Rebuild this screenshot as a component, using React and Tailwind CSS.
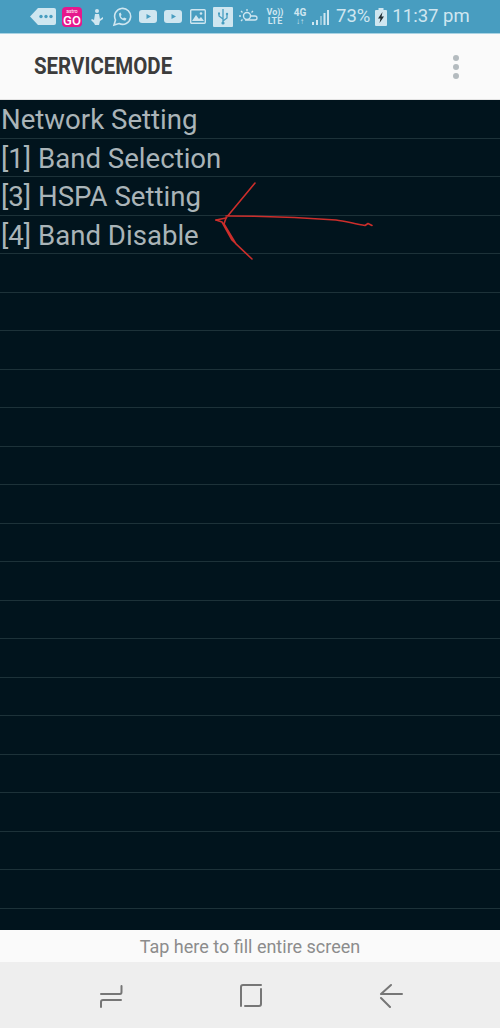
function Icon({ children, w = 20, h = 20, vb, className = "" }) {
  return (
    <svg width={w} height={h} viewBox={vb || `0 0 ${w} ${h}`} className={"shrink-0 " + className}>
      {children}
    </svg>
  );
}

const C = "#cfe6f0";

function StatusBar() {
  return (
    <div className="relative h-[34px] bg-[#489dc0] border-b border-[#a9d3e3] font-['Roboto',sans-serif] flex items-center">
      <div className="flex items-center pl-[30px] w-[260px]">
        <Icon w={26} h={19}>
          <path d="M0 9.5 L8 1 H24 a2 2 0 0 1 2 2 V16 a2 2 0 0 1-2 2 H8 Z" fill={C} />
          <circle cx="11" cy="9.5" r="1.7" fill="#489dc0" />
          <circle cx="16" cy="9.5" r="1.7" fill="#489dc0" />
          <circle cx="21" cy="9.5" r="1.7" fill="#489dc0" />
        </Icon>
        <div className="ml-[6px] w-5 h-5 rounded-[4px] bg-[#e6178c] flex flex-col items-center justify-end shrink-0 overflow-hidden">
          <span className="text-[5px] leading-[5px] text-white">astro</span>
          <span className="text-[13px] leading-[13px] font-medium text-white">GO</span>
        </div>
        <Icon w={14} h={18} className="ml-[8px]">
          <circle cx="7" cy="3" r="2" fill={C} />
          <path d="M5 6 h4 l1 5 l3 -2 v2 l-3 2 l-1 4 h-4 l-1 -2 l-3 -3 l1 -1 l2 1 z" fill={C} />
        </Icon>
        <Icon w={20} h={20} className="ml-[8px]">
          <path d="M2 18 L3.5 13 A8 8 0 1 1 7 16.5 Z" fill="none" stroke={C} strokeWidth="1.6" />
          <path d="M7 6.5 C7 11 10 13.5 13.5 13.5 L14.5 11.5 L12 10.5 L11 11.5 C10 11 9 10 8.7 9 L9.6 8 L8.6 5.5 Z" fill={C} />
        </Icon>
        {[0, 1].map((i) => (
          <Icon key={i} w={18} h={13} className="ml-[7px]">
            <rect x="0" y="0" width="18" height="13" rx="3" fill={C} />
            <path d="M7.5 4 L12 6.5 L7.5 9 Z" fill="#489dc0" />
          </Icon>
        ))}
        <Icon w={16} h={15} className="ml-[8px]">
          <rect x="0.7" y="0.7" width="14.6" height="13.6" rx="1" fill="none" stroke={C} strokeWidth="1.4" />
          <path d="M2 12 L6 6 L9 10 L11 8 L14 12 Z" fill={C} />
          <circle cx="11" cy="4.5" r="1.3" fill={C} />
        </Icon>
        <div className="ml-[7px] w-5 h-5 bg-[#cfe6f0] rounded-[1px] flex items-center justify-center shrink-0">
          <Icon w={12} h={17}>
            <path d="M6 1 V16 M6 11 L2 8 V6 M6 13 L10 10 V7" fill="none" stroke="#489dc0" strokeWidth="1.3" />
            <circle cx="6" cy="15" r="1.6" fill="#489dc0" />
            <rect x="1" y="4.5" width="2" height="2" fill="#489dc0" />
            <circle cx="10" cy="6" r="1.2" fill="#489dc0" />
          </Icon>
        </div>
        <Icon w={20} h={17} className="ml-[5px]">
          <circle cx="9" cy="8" r="3.5" fill="none" stroke={C} strokeWidth="1.4" />
          <path d="M9 1 V3 M3 3 L4.5 4.5 M1 8 H3 M3 13 L4.5 11.5 M15 3 L13.5 4.5" stroke={C} strokeWidth="1.3" />
          <path d="M7 12 H17 a2 2 0 0 0 0 -4 H12" fill="none" stroke={C} strokeWidth="1.3" />
        </Icon>
      </div>
      <div className="flex items-center absolute left-[266px] top-0 h-[33px]">
        <div className="flex flex-col items-center text-[#cfe6f0] font-bold text-[9px] leading-[9px] w-[18px] shrink-0">
          <span>Vo))</span>
          <span>LTE</span>
        </div>
        <div className="ml-[9px] flex flex-col items-center text-[#cfe6f0] font-bold text-[10px] leading-[9px] w-[14px] shrink-0">
          <span>4G</span>
          <span className="text-[8px]">↓↑</span>
        </div>
        <Icon w={17} h={16} className="ml-[5px]">
          <rect x="0" y="13" width="2" height="3" fill={C} />
          <rect x="4" y="11" width="2" height="5" fill={C} />
          <rect x="8" y="7" width="2" height="9" fill="#8fc3d8" />
          <rect x="11.5" y="4" width="2" height="12" fill={C} />
          <rect x="15" y="1" width="2" height="15" fill={C} />
        </Icon>
        <span className="ml-[7px] text-[#cfe6f0] text-[18.5px] leading-none whitespace-nowrap">73%</span>
        <Icon w={12} h={18} className="ml-[5px]">
          <rect x="3.5" y="0" width="5" height="2" fill={C} />
          <rect x="0" y="2" width="12" height="16" rx="1" fill={C} />
          <path d="M7.5 4 L3 10.5 H5.5 L4.5 15 L9 8.5 H6.5 Z" fill="#1f2d33" />
        </Icon>
        <span className="ml-[5px] text-[#cfe6f0] text-[18.5px] leading-none whitespace-nowrap">11:37 pm</span>
      </div>
    </div>
  );
}

function AppBar() {
  return (
    <div className="h-[66px] bg-[#fafafa] flex items-center justify-between pl-[34px] pr-[41px] border-b border-[#e3e3e3]">
      <span className="font-['Roboto',sans-serif] font-bold text-[23px] leading-none text-[#3c3c3c] scale-x-[0.89] origin-left">
        SERVICEMODE
      </span>
      <div className="flex flex-col gap-[3px]">
        <span className="w-[6px] h-[6px] rounded-full bg-[#b4bbbf]" />
        <span className="w-[6px] h-[6px] rounded-full bg-[#b4bbbf]" />
        <span className="w-[6px] h-[6px] rounded-full bg-[#b4bbbf]" />
      </div>
    </div>
  );
}

const rows = ["Network Setting", "[1] Band Selection", "[3] HSPA Setting", "[4] Band Disable"];

function List() {
  return (
    <div className="relative h-[830px] bg-[#01141d] overflow-hidden font-['Roboto',sans-serif]">
      {Array.from({ length: 22 }).map((_, i) => (
        <div key={i} className="h-[38.5px] border-b border-[#1d3239] flex items-center pt-[3px]">
          <span className="pl-px text-[27.6px] leading-none text-[#aab4b8] whitespace-nowrap">
            {rows[i] || ""}
          </span>
        </div>
      ))}
      <svg className="absolute left-0 top-0 pointer-events-none" width="500" height="200" fill="none" stroke="#cc2e2b" strokeWidth="1.6" strokeLinecap="round" strokeLinejoin="round">
        <path d="M255 83 L226 118 L216 120 M226 116 C260 116 293 117 336 120 C345 121 355 124 365 125.5 L368 123.5 L372 125.5" />
        <path d="M216 120 L222 122 L232 140 L252 159 L236 144 L224 124 L226 118" />
      </svg>
    </div>
  );
}

function NavBar() {
  const s = { fill: "none", stroke: "#767676", strokeWidth: 2, strokeLinecap: "round", strokeLinejoin: "round" };
  return (
    <div className="h-[66px] bg-[#eeeeee] flex items-start pt-[21px] pl-[100px]">
      <Icon w={23} h={25}>
        <path d="M1 24 V19 Q1 17 3 17 H21 M1 11 H20 Q21.5 11 21.5 9 V3" {...s} />
      </Icon>
      <Icon w={24} h={25} className="ml-[116px]">
        <path d="M2 23 V4 Q2 2 4 2 H22 M6 23 H20 Q22 23 22 21 V6" {...s} />
      </Icon>
      <Icon w={24} h={25} className="ml-[116px]">
        <path d="M12 2 L2 11 H23 M2 15 L11 24" {...s} />
      </Icon>
    </div>
  );
}

export default function App() {
  return (
    <div className="w-[500px] h-[1028px] overflow-hidden flex flex-col bg-white">
      <StatusBar />
      <AppBar />
      <List />
      <div className="h-[32px] bg-[#fafafa] flex items-center justify-center font-['Roboto',sans-serif] text-[18px] text-[#8c8c8c] pt-px">
        Tap here to fill entire screen
      </div>
      <NavBar />
    </div>
  );
}
